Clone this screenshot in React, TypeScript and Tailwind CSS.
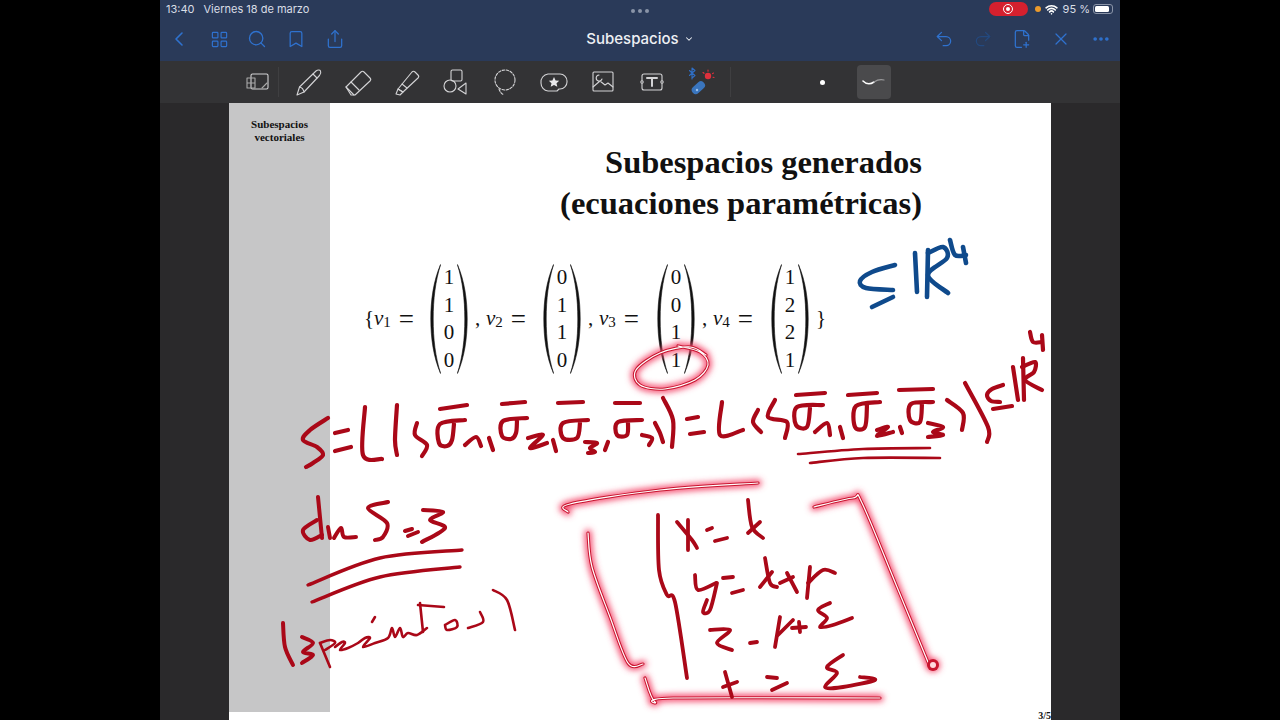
import { Bookmark, ChevronDown, ChevronLeft, FilePlus2, LayoutGrid, MoreHorizontal, Redo2, Search, Share, Undo2, Wifi, X } from "lucide-react";

// ink strokes are flat lists of x,y in page pixels
function smooth(p: number[]) {
  let d = `M${p[0]} ${p[1]}`;
  for (let i = 2; i < p.length; i += 2) {
    const x0 = p[Math.max(i - 4, 0)], y0 = p[Math.max(i - 3, 1)];
    const x1 = p[i - 2], y1 = p[i - 1], x2 = p[i], y2 = p[i + 1];
    const x3 = p[Math.min(i + 2, p.length - 2)], y3 = p[Math.min(i + 3, p.length - 1)];
    d += ` C${x1 + (x2 - x0) / 6} ${y1 + (y2 - y0) / 6} ${x2 - (x3 - x1) / 6} ${y2 - (y3 - y1) / 6} ${x2} ${y2}`;
  }
  return d;
}

const redLine1 = [
  [328, 418, 310, 430, 303, 440, 317, 447, 323, 455, 313, 463, 306, 467],
  [335, 433, 348, 430], [335, 451, 351, 447],
  [365, 407, 363, 455, 382, 459],
  [397, 405, 395, 440, 397, 455],
  [417, 423, 415, 435, 427, 445, 422, 456],
  [440, 409, 467, 405], [465, 420, 440, 424, 439, 443, 447, 446, 452, 440, 454, 424],
  [465, 445, 476, 437, 481, 446], [489, 438, 493, 450],
  [502, 404, 525, 402], [527, 418, 503, 421, 502, 436, 511, 439, 516, 433, 517, 420],
  [528, 438, 543, 435, 530, 448, 547, 443], [553, 440, 556, 451],
  [558, 403, 583, 402], [588, 420, 563, 423, 563, 438, 577, 438, 580, 423],
  [585, 442, 597, 443, 590, 448, 595, 452, 588, 453], [608, 442, 605, 450],
  [615, 403, 640, 403], [642, 420, 618, 422, 617, 435, 627, 435, 628, 422],
  [642, 435, 652, 438, 649, 445], [655, 423, 660, 433, 663, 442],
  [663, 398, 673, 420, 672, 447],
  [687, 419, 698, 417], [690, 434, 704, 432],
  [722, 402, 720, 435, 743, 430],
  [758, 410, 753, 422, 761, 432],
  [775, 400, 768, 417, 787, 422, 785, 438],
  [796, 395, 825, 393], [823, 405, 797, 407, 796, 425, 807, 427, 810, 408],
  [815, 432, 827, 423, 830, 435], [840, 427, 843, 438],
  [848, 395, 877, 393], [880, 402, 856, 406, 855, 427, 865, 427, 867, 405],
  [877, 430, 888, 427, 877, 436, 893, 432], [900, 427, 902, 433],
  [899, 390, 933, 389], [933, 402, 911, 404, 910, 420, 920, 422, 922, 403],
  [928, 423, 943, 427, 933, 432, 943, 435, 928, 437],
  [947, 400, 963, 413, 962, 430],
  [965, 383, 988, 427, 987, 442],
  [1003, 385, 992, 389, 987, 395, 991, 401, 1000, 402], [993, 409, 1012, 406],
  [1013, 367, 1018, 400], [1023, 358, 1024, 400],
  [1022, 367, 1035, 362, 1034, 372, 1025, 380, 1042, 390],
  [1030, 332, 1033, 342, 1042, 342], [1042, 335, 1043, 350],
];

const redDim = [
  [318, 497, 322, 538], [317, 520, 303, 530, 310, 540, 322, 535],
  [328, 527, 330, 538], [334, 538, 341, 528, 344, 537, 356, 537],
  [388, 502, 368, 508, 387, 523, 383, 537, 375, 540],
  [405, 531, 412, 529], [408, 536, 418, 532],
  [423, 510, 443, 512, 430, 520, 445, 528, 422, 542],
  [283, 623, 285, 647, 293, 665],
  [302, 637, 313, 643, 303, 652, 313, 655, 302, 663],
];

const redThin = [
  [798, 454, 863, 449, 930, 448], [810, 463, 863, 458, 940, 458],
  [320, 643, 330, 667],
  [320, 643, 330, 640, 335, 643, 325, 650],
  [335, 647, 342, 642, 345, 643, 340, 650, 348, 648, 358, 643, 365, 638, 370, 638, 363, 647, 375, 643, 388, 638, 392, 628, 395, 637, 400, 628, 403, 637, 408, 633, 417, 635, 427, 628],
  [372, 622, 375, 617],
  [418, 605, 444, 607], [420, 603, 423, 632],
  [445, 625, 455, 620, 457, 627, 447, 630, 445, 625],
  [480, 612, 483, 622, 468, 628],
  [493, 590, 507, 600, 515, 630],
];

const redSystem = [
  [658, 515, 659, 570, 667, 595, 675, 602, 687, 678],
  [677, 522, 692, 540, 697, 548], [688, 520, 688, 550],
  [707, 530, 712, 528], [715, 541, 727, 538],
  [748, 500, 752, 527, 763, 538], [748, 533, 760, 522],
  [695, 575, 698, 590, 716, 583], [717, 583, 710, 610, 703, 612, 707, 600],
  [723, 578, 733, 577], [732, 593, 743, 590],
  [765, 558, 770, 583, 777, 587], [760, 587, 772, 572],
  [787, 573, 797, 592], [780, 583, 793, 577],
  [807, 598, 810, 567], [808, 583, 823, 570, 835, 573],
  [710, 630, 730, 630, 717, 643, 732, 650],
  [750, 643, 757, 642],
  [775, 647, 780, 617], [778, 635, 793, 620],
  [792, 628, 806, 627], [799, 622, 800, 632],
  [830, 603, 818, 610, 827, 618, 820, 627, 833, 625, 852, 618],
  [725, 672, 732, 697], [723, 687, 737, 682],
  [767, 677, 777, 678], [772, 690, 787, 683],
  [843, 655, 827, 667, 837, 673, 825, 687, 843, 687, 875, 680, 860, 677],
];

const blueInk = [
  [895, 265, 872, 272, 860, 281, 866, 288, 893, 290], [872, 307, 893, 297],
  [915, 253, 917, 292], [928, 250, 927, 297],
  [928, 253, 943, 247, 947, 258, 928, 275, 948, 293],
  [950, 240, 955, 255, 966, 255], [963, 247, 966, 263],
];

const lit = [
  [568, 512, 570, 504, 660, 490, 758, 483],
  [814, 507, 853, 498, 862, 503, 897, 587, 930, 667],
  [588, 533, 592, 567, 610, 617, 628, 663, 643, 664],
  [645, 678, 655, 702, 673, 698, 880, 698],
  [706, 355, 690, 347, 660, 353, 636, 370, 640, 385, 665, 389, 695, 380, 708, 365, 700, 352, 678, 346],
];

function Strokes({ list, color, width }: { list: number[][]; color: string; width: number }) {
  return (
    <g fill="none" stroke={color} strokeWidth={width} strokeLinecap="round" strokeLinejoin="round">
      {list.map((s, i) => <path key={i} d={smooth(s)} />)}
    </g>
  );
}

function Ink() {
  return (
    <svg viewBox="0 0 1280 720" className="pointer-events-none absolute inset-0 h-[720px] w-[1280px]">
      <defs>
        <filter id="glow" x="-20%" y="-20%" width="140%" height="140%">
          <feGaussianBlur stdDeviation="3" />
        </filter>
      </defs>
      <g filter="url(#glow)">
        <Strokes list={lit} color="#f4466a" width={7} />
        <circle cx="933" cy="665" r="7" fill="#f4466a" />
      </g>
      <Strokes list={lit} color="#c8152f" width={3.2} />
      <Strokes list={lit} color="#ffffff" width={1.2} />
      <circle cx="933" cy="665" r="6" fill="#c8152f" />
      <circle cx="933" cy="665" r="3" fill="#ffd8de" />
      <Strokes list={redLine1} color="#aa0818" width={4.2} />
      <Strokes list={redDim} color="#aa0818" width={4} />
      <Strokes list={redThin} color="#aa0818" width={2.6} />
      <Strokes list={[[308, 585, 380, 558, 462, 550], [312, 602, 380, 577, 460, 567]]} color="#aa0818" width={3.4} />
      <Strokes list={redSystem} color="#aa0818" width={3.8} />
      <Strokes list={blueInk} color="#0f4a8c" width={4.6} />
    </svg>
  );
}

function Paren({ flip }: { flip?: boolean }) {
  return (
    <svg viewBox="0 0 11 110" className={`h-[110px] w-[11px] shrink-0 ${flip ? "-scale-x-100" : ""}`}>
      <path d="M10.6 0.5C3.4 17 0.8 36 0.8 55S3.4 93 10.6 109.5C5.4 93 3.2 75 3.2 55S5.4 17 10.6 0.5Z" fill="#111" stroke="#111" strokeWidth="0.6" />
    </svg>
  );
}

function Matrix({ values }: { values: number[] }) {
  return (
    <div className="flex h-[110px] w-[38px] shrink-0 items-center">
      <Paren />
      <div className="flex flex-1 flex-col items-center">
        {values.map((v, i) => <span key={i} className="h-[27.5px] leading-[26px]">{v}</span>)}
      </div>
      <Paren flip />
    </div>
  );
}

function Label({ n, comma, w }: { n: number; comma?: boolean; w: string }) {
  return (
    <div className={`flex shrink-0 items-center ${w}`}>
      {comma ? <span className="ml-[7px] w-[11px]">,</span> : <span className="w-[10px]">{"{"}</span>}
      <span className="italic">v</span>
      <span className="mt-[7px] text-[15px]">{n}</span>
      <span className="ml-[8px] text-[27px] leading-none">=</span>
    </div>
  );
}

function ToolIcon({ children, className = "w-[49px]" }: { children: React.ReactNode; className?: string }) {
  return (
    <div className={`flex h-[30px] shrink-0 items-center justify-center ${className}`}>
      <svg viewBox="0 0 30 30" className="h-[30px] w-[30px]" fill="none" stroke="#d4d4d6" strokeWidth="1.1" strokeLinejoin="round" strokeLinecap="round">
        {children}
      </svg>
    </div>
  );
}

function Toolbar() {
  return (
    <div className="flex h-[42px] items-center bg-[#333335] pl-[75px]">
      <ToolIcon className="mr-[5px] w-[44px] border-r border-[#3f3f41]">
        <rect x="9" y="7" width="17" height="15" rx="1.5" />
        <path d="M5 11h8v10H5zM5 16h8M20 21l5-5" stroke="#aaa" />
      </ToolIcon>
      <ToolIcon>
        <path d="M3 28l2.5-8L22 4c2-1.5 4-1 4.5 0s.5 2.5-1 4.5L10 25z" />
        <path d="M5.5 20c2 .5 4 2.5 4.5 5M19 7l4 4" />
      </ToolIcon>
      <ToolIcon>
        <path d="M3 20L18 5c1-1 2-1 3 0l6 6c1 1 1 2 0 3L12 28H8z" />
        <path d="M3 20l8 8M8 15l8 8" />
      </ToolIcon>
      <ToolIcon>
        <path d="M6 22l14-17c1-1 2-1 3 0l3 3c1 1 1 2 0 3L11 25z" />
        <path d="M6 22l5 3-3 3-4-1zM10 17l5 4" />
      </ToolIcon>
      <ToolIcon>
        <rect x="10" y="3" width="11" height="11" rx="1.5" />
        <circle cx="9" cy="19" r="6" />
        <path d="M25 16v11l-8-5z" />
      </ToolIcon>
      <ToolIcon>
        <ellipse cx="15" cy="13" rx="10" ry="10" strokeDasharray="2.5 1.5" />
        <path d="M9 22c1 3 3 5 5 6" strokeDasharray="2.5 1.5" />
      </ToolIcon>
      <ToolIcon>
        <path d="M9 7h12a7 7 0 017 7v1a7 7 0 01-7 7h-1l-2 2H9a8 8 0 01-7-8 8 8 0 017-9z" />
        <path d="M15 10l1.6 3.4 3.6.4-2.7 2.4.8 3.6-3.3-1.9-3.3 1.9.8-3.6-2.7-2.4 3.6-.4z" fill="#e8e8ea" stroke="none" />
      </ToolIcon>
      <ToolIcon>
        <rect x="5" y="5" width="20" height="19" rx="1" />
        <path d="M5 20l7-6 5 4 3-2 5 4M11 8a3 3 0 103 4" />
      </ToolIcon>
      <ToolIcon>
        <rect x="5" y="7" width="20" height="16" rx="2" />
        <path d="M10 11h10M15 11v8" strokeWidth="2" />
        <circle cx="5" cy="15" r="1.2" fill="#333" />
        <circle cx="25" cy="15" r="1.2" fill="#333" />
      </ToolIcon>
      <ToolIcon>
        <path d="M6 1l3 2.5-3 2.5 3 2.5-3 2.5M6 1v11M3.5 3.5L6 6l-2.5 2.5" stroke="#2f6fc6" />
        <rect x="5" y="17" width="15" height="8" rx="4" transform="rotate(-42 12 21)" fill="#3a75bd" stroke="none" />
        <circle cx="11" cy="23" r="1.2" fill="#9cc0ea" stroke="none" />
        <circle cx="22" cy="9" r="3.2" fill="#e0303c" stroke="none" />
        <path d="M22 3v1.2M27.5 6l-1 .6M28 10.5l-1-.3M17 5.5l1 .8" stroke="#e0303c" />
      </ToolIcon>
      <div className="ml-[5px] h-[30px] w-px bg-[#3f3f41]" />
      <div className="ml-[89px] h-[5px] w-[5px] rounded-full bg-white" />
      <div className="ml-[32px] flex h-[34px] w-[34px] items-center justify-center rounded-[4px] bg-[#4a4a4c]">
        <svg viewBox="0 0 24 10" className="w-[24px]" fill="none" strokeLinecap="round">
          <path d="M1 4c4 4 8 3 11 1" stroke="#fff" strokeWidth="1.6" />
          <path d="M12 5c3-2 6-3 10-2" stroke="#9a9a9c" strokeWidth="1.2" />
        </svg>
      </div>
    </div>
  );
}

function Header() {
  return (
    <div className="h-[61px] bg-[#2a3a59]">
      <div className="grid h-[18px] grid-cols-[1fr_auto_1fr] items-center pl-[6px] pr-[7px] text-[11px] text-[#d9dde6]">
        <div className="flex gap-[9px]">
          <span>13:40</span>
          <span>Viernes 18 de marzo</span>
        </div>
        <div className="flex gap-[3px] pt-[3px]">
          <span className="h-[4px] w-[4px] rounded-full bg-[#8a94a8]" />
          <span className="h-[4px] w-[4px] rounded-full bg-[#8a94a8]" />
          <span className="h-[4px] w-[4px] rounded-full bg-[#8a94a8]" />
        </div>
        <div className="flex items-center justify-end">
          <div className="flex h-[14px] w-[39px] items-center justify-center rounded-full bg-[#d5202e]">
            <span className="flex h-[10px] w-[10px] items-center justify-center rounded-full border border-white">
              <span className="h-[4px] w-[4px] rounded-full bg-white" />
            </span>
          </div>
          <span className="ml-[7px] h-[6px] w-[6px] rounded-full bg-[#eb9a2c]" />
          <Wifi className="ml-[4px] h-[13px] w-[13px] text-white" strokeWidth={3} />
          <span className="ml-[5px]">95 %</span>
          <div className="ml-[3px] flex h-[10px] w-[20px] items-center rounded-[3px] border border-[#8a94a8] p-px">
            <div className="h-full w-[90%] rounded-[1.5px] bg-white" />
          </div>
        </div>
      </div>
      <div className="grid h-[42px] grid-cols-[1fr_auto_1fr] items-center text-[#2f72cf]">
        <div className="flex items-center pl-[7px]">
          <ChevronLeft className="h-[24px] w-[24px]" strokeWidth={1.6} />
          <LayoutGrid className="ml-[19px] h-[19px] w-[19px]" strokeWidth={1.5} />
          <Search className="ml-[18px] h-[20px] w-[20px]" strokeWidth={1.6} />
          <Bookmark className="ml-[19px] h-[20px] w-[20px]" strokeWidth={1.5} />
          <Share className="ml-[19px] h-[20px] w-[20px]" strokeWidth={1.5} />
        </div>
        <div className="flex items-center gap-[5px] text-[15px] font-medium text-[#eef0f4]">
          Subespacios
          <ChevronDown className="h-[10px] w-[10px]" strokeWidth={2.5} />
        </div>
        <div className="flex items-center justify-end pr-[9px]">
          <Undo2 className="h-[20px] w-[20px]" strokeWidth={1.5} />
          <Redo2 className="ml-[19px] h-[20px] w-[20px] text-[#23497f]" strokeWidth={1.5} />
          <FilePlus2 className="ml-[19px] h-[20px] w-[20px]" strokeWidth={1.5} />
          <X className="ml-[19px] h-[20px] w-[20px]" strokeWidth={1.5} />
          <MoreHorizontal className="ml-[20px] h-[20px] w-[20px]" strokeWidth={2.4} />
        </div>
      </div>
    </div>
  );
}

export default function App() {
  return (
    <div className="relative flex h-[720px] w-[1280px] justify-center overflow-hidden bg-black font-['Liberation_Serif',serif] text-[#111]">
      <div className="flex w-[960px] flex-col font-['Inter',sans-serif]">
        <Header />
        <Toolbar />
        <div className="flex min-h-0 flex-1 bg-[#2a292b] pl-[69px] pr-[69px]">
          <div className="relative flex h-[617px] w-full bg-white font-['Liberation_Serif',serif]">
            <div className="h-[609px] w-[101px] shrink-0 bg-[#c6c6c7] pt-[15px] text-center text-[11px] font-bold leading-[13px]">
              Subespacios
              <br />
              vectoriales
            </div>
            <div className="flex min-w-0 flex-1 flex-col">
              <div className="pr-[129px] pt-[39px] text-right text-[32.5px] font-bold leading-[41px]">
                Subespacios generados
                <br />
                (ecuaciones paramétricas)
              </div>
              <div className="mt-[40px] flex items-center pl-[34px] text-[21px]">
                <Label n={1} w="w-[66px]" />
                <Matrix values={[1, 1, 0, 0]} />
                <Label n={2} comma w="w-[75px]" />
                <Matrix values={[0, 1, 1, 0]} />
                <Label n={3} comma w="w-[76px]" />
                <Matrix values={[0, 0, 1, 1]} />
                <Label n={4} comma w="w-[76px]" />
                <Matrix values={[1, 2, 2, 1]} />
                <span className="ml-[7px]">{"}"}</span>
              </div>
              <div className="mt-auto text-right text-[10px] font-bold leading-[9px]">3/5</div>
            </div>
          </div>
        </div>
      </div>
      <Ink />
    </div>
  );
}
